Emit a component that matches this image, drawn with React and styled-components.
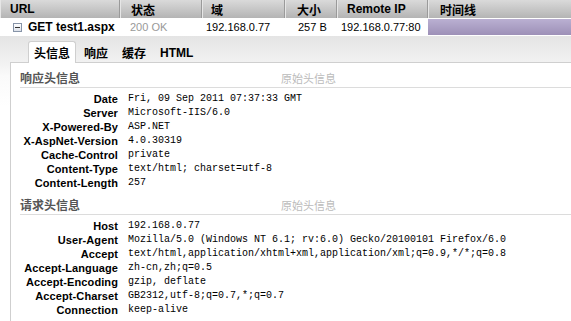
import React from 'react';
import styled, { createGlobalStyle } from 'styled-components';

const GlobalStyle = createGlobalStyle`
  body {
    margin: 0;
    background: #fff;
    font-family: 'Liberation Sans', 'Noto Sans CJK SC', sans-serif;
    font-size: 12px;
    color: #000;
  }
`;

const columns = '120px 82px 83px 52px 91px 1fr';

const HeaderBar = styled.div`
  display: grid;
  grid-template-columns: ${columns};
  height: 18px;
  background: linear-gradient(#dadada, #b4b4b4);
`;

const HeaderCell = styled.div`
  display: flex;
  align-items: center;
  padding-left: ${(p) => p.$pad}px;
  font-weight: 700;
  font-size: 12px;
  border-right: 1px solid #9a9a9a;
  box-shadow: inset 1px 0 0 #e6e6e6;
  white-space: nowrap;

  &:last-child {
    border-right: none;
  }
`;

const RequestRow = styled.div`
  display: grid;
  grid-template-columns: ${columns};
  height: 18px;
  background: #fff;
`;

const Cell = styled.div`
  display: flex;
  align-items: center;
  padding-left: ${(p) => p.$pad}px;
  color: ${(p) => p.$muted ? '#999' : '#000'};
  font-weight: ${(p) => p.$bold ? 700 : 400};
  font-size: ${(p) => p.$bold ? 12 : 11}px;
  white-space: nowrap;
`;

const Toggle = styled.span`
  width: 7px;
  height: 7px;
  margin: 0 6px 0 0;
  border: 1px solid #8794a8;
  background: linear-gradient(#fff, #dde2ea);
  position: relative;

  &::after {
    content: '';
    position: absolute;
    left: 1px;
    right: 1px;
    top: 3px;
    height: 1px;
    background: #333;
  }
`;

const TimelineBar = styled.div`
  margin: 1px 0;
  background: linear-gradient(#bab0d2, #9d90b7);
`;

const Details = styled.div`
  background: linear-gradient(#e4e4e4, #f1f1f1 26px, #fafafa 40px, #fff 70px);
  padding-left: 10px;
`;

const TabStrip = styled.div`
  display: flex;
  align-items: flex-end;
  height: 26px;
  padding-left: 18px;
`;

const Tab = styled.div`
  height: 21px;
  display: flex;
  align-items: center;
  padding: 0 ${(p) => p.$active ? '5px' : '6px'};
  margin-right: ${(p) => p.$active ? '1px' : '0'};
  font-weight: 700;
  font-size: 12px;
  background: ${(p) => p.$active ? '#fff' : 'transparent'};
  border: 1px solid ${(p) => p.$active ? '#cfcfcf' : 'transparent'};
  border-bottom: none;
  border-radius: 3px 3px 0 0;
  margin-bottom: -1px;
  position: relative;
`;

const Panel = styled.div`
  background: #fff;
  border-top: 1px solid #cfcfcf;
  border-left: 1px solid #cfcfcf;
  padding-left: 9px;
  height: 258px;
`;

const SectionHead = styled.div`
  display: flex;
  height: 23px;
  align-items: flex-end;
  padding-bottom: 1px;
  border-bottom: 1px solid #dcdcdc;
  box-sizing: content-box;
  line-height: 14px;
`;

const SectionTitle = styled.div`
  width: 261px;
  color: #555;
  font-weight: 700;
  font-size: 12px;
`;

const RawLink = styled.div`
  color: #bbb;
  font-size: 11px;
`;

const Rows = styled.div`
  display: grid;
  grid-template-columns: 98px 1fr;
  column-gap: 10px;
  padding-top: 4px;
`;

const Name = styled.div`
  height: 14px;
  line-height: 14px;
  text-align: right;
  font-weight: 700;
  font-size: 11px;
  letter-spacing: 0.1px;
  white-space: nowrap;
`;

const Value = styled.div`
  height: 14px;
  line-height: 14px;
  font-family: 'Liberation Mono', monospace;
  font-size: 10px;
  white-space: nowrap;
`;

const responseHeaders = [
  ['Date', 'Fri, 09 Sep 2011 07:37:33 GMT'],
  ['Server', 'Microsoft-IIS/6.0'],
  ['X-Powered-By', 'ASP.NET'],
  ['X-AspNet-Version', '4.0.30319'],
  ['Cache-Control', 'private'],
  ['Content-Type', 'text/html; charset=utf-8'],
  ['Content-Length', '257'],
];

const requestHeaders = [
  ['Host', '192.168.0.77'],
  ['User-Agent', 'Mozilla/5.0 (Windows NT 6.1; rv:6.0) Gecko/20100101 Firefox/6.0'],
  ['Accept', 'text/html,application/xhtml+xml,application/xml;q=0.9,*/*;q=0.8'],
  ['Accept-Language', 'zh-cn,zh;q=0.5'],
  ['Accept-Encoding', 'gzip, deflate'],
  ['Accept-Charset', 'GB2312,utf-8;q=0.7,*;q=0.7'],
  ['Connection', 'keep-alive'],
];

const HeaderSection = ({ title, items }) => (
  <div>
    <SectionHead>
      <SectionTitle>{title}</SectionTitle>
      <RawLink>原始头信息</RawLink>
    </SectionHead>
    <Rows>
      {items.map(([k, v]) => (
        <React.Fragment key={k}>
          <Name>{k}</Name>
          <Value>{v}</Value>
        </React.Fragment>
      ))}
    </Rows>
  </div>
);

const App = () => (
  <>
    <GlobalStyle />
    <HeaderBar>
      <HeaderCell $pad={10}>URL</HeaderCell>
      <HeaderCell $pad={11}>状态</HeaderCell>
      <HeaderCell $pad={9}>域</HeaderCell>
      <HeaderCell $pad={12}>大小</HeaderCell>
      <HeaderCell $pad={10}>Remote IP</HeaderCell>
      <HeaderCell $pad={12}>时间线</HeaderCell>
    </HeaderBar>
    <RequestRow>
      <Cell $pad={13} $bold>
        <Toggle />
        GET test1.aspx
      </Cell>
      <Cell $pad={10} $muted>200 OK</Cell>
      <Cell $pad={4}>192.168.0.77</Cell>
      <Cell $pad={13}>257 B</Cell>
      <Cell $pad={4}>192.168.0.77:80</Cell>
      <TimelineBar />
    </RequestRow>
    <Details>
      <TabStrip>
        <Tab $active>头信息</Tab>
        <Tab>响应</Tab>
        <Tab>缓存</Tab>
        <Tab>HTML</Tab>
      </TabStrip>
      <Panel>
        <HeaderSection title="响应头信息" items={responseHeaders} />
        <HeaderSection title="请求头信息" items={requestHeaders} />
      </Panel>
    </Details>
  </>
);

export default App;
